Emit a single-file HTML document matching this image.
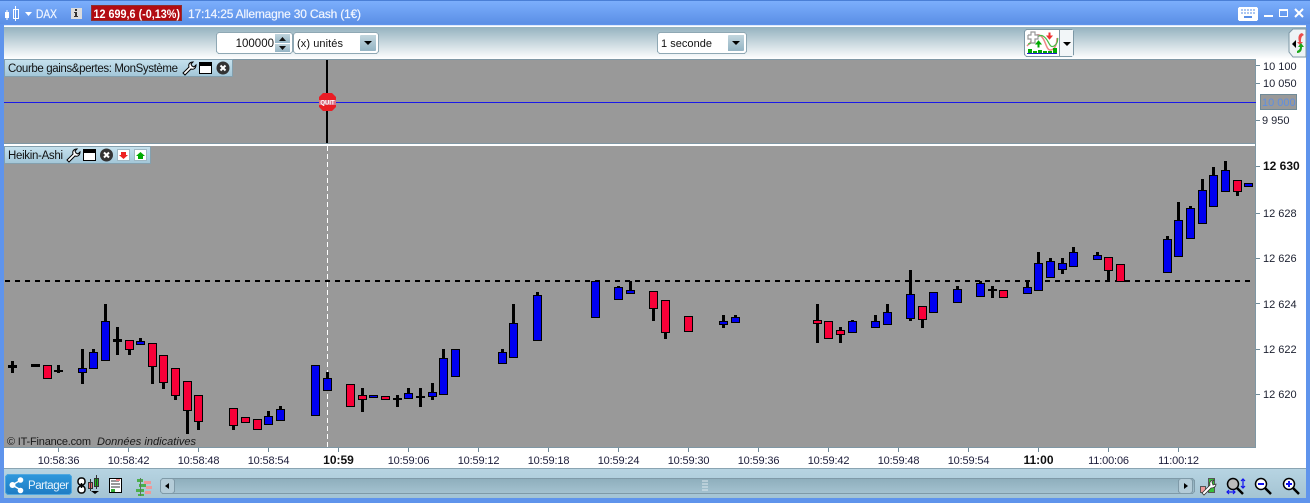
<!DOCTYPE html>
<html><head><meta charset="utf-8"><style>
html,body{margin:0;padding:0;background:#fff;width:1310px;height:503px;overflow:hidden}
svg{display:block}
text{font-family:"Liberation Sans",sans-serif;font-size:11px}
.ax{fill:#1c1c3a;text-anchor:middle;letter-spacing:-.15px}
.pr{fill:#1c2030}
.b rect{fill:#0000f0;stroke:#000;stroke-width:1}
.r rect{fill:#f80038;stroke:#000;stroke-width:1}
</style></head><body>
<svg width="1310" height="503" viewBox="0 0 1310 503" xmlns="http://www.w3.org/2000/svg" shape-rendering="crispEdges">
<defs>
<linearGradient id="tb" x1="0" y1="0" x2="0" y2="1"><stop offset="0" stop-color="#7db0fd"/><stop offset="1" stop-color="#5b8fe6"/></linearGradient>
<linearGradient id="tl" x1="0" y1="0" x2="0" y2="1"><stop offset="0" stop-color="#94b2bf"/><stop offset="1" stop-color="#ffffff"/></linearGradient>
<linearGradient id="bb" x1="0" y1="0" x2="0" y2="1"><stop offset="0" stop-color="#b7d4e2"/><stop offset="1" stop-color="#a4c4d3"/></linearGradient>
<linearGradient id="lg" x1="0" y1="0" x2="0" y2="1"><stop offset="0" stop-color="#c6e2ee"/><stop offset="1" stop-color="#a2c6d8"/></linearGradient>
<linearGradient id="btn" x1="0" y1="0" x2="0" y2="1"><stop offset="0" stop-color="#c2d6de"/><stop offset="1" stop-color="#94b4c4"/></linearGradient>
<linearGradient id="sh" x1="0" y1="0" x2="0" y2="1"><stop offset="0" stop-color="#2e98dc"/><stop offset="1" stop-color="#1f7cc4"/></linearGradient>
<linearGradient id="sc" x1="0" y1="0" x2="0" y2="1"><stop offset="0" stop-color="#8eaebc"/><stop offset="1" stop-color="#a4c2d0"/></linearGradient>
</defs>

<!-- window frame -->
<rect width="1310" height="503" fill="#5f94ec"/>
<rect y="0" width="1310" height="24" fill="url(#tb)"/>
<rect x="0" y="0" width="1310" height="1" fill="#4a7fd6"/>
<rect x="4" y="25" width="1302" height="1" fill="#dbe8fb"/>
<rect x="4" y="26" width="1302" height="472" fill="#fff"/>
<rect x="4" y="27" width="1302" height="32" fill="url(#tl)"/>

<!-- title bar -->
<g>
<rect x="5" y="12" width="4" height="6" fill="#fff"/><rect x="6.500" y="10" width="1" height="10" fill="#fff"/>
<rect x="13.500" y="9.500" width="5" height="9" fill="none" stroke="#fff"/><rect x="15" y="6" width="1" height="15" fill="#fff"/>
<path d="M25 12h7l-3.500 4z" fill="#fff" shape-rendering="auto"/>
<text x="36" y="18" fill="#eef4ff" stroke="#eef4ff" stroke-width=".25" style="font-size:11.500px" textLength="21" lengthAdjust="spacingAndGlyphs">DAX</text>
<rect x="71" y="8" width="11" height="11" fill="#dcdcdc"/><rect x="75" y="9" width="2" height="2" fill="#333"/><rect x="74" y="12" width="3" height="1" fill="#333"/><rect x="75" y="12" width="2" height="5" fill="#333"/><rect x="74" y="16" width="4" height="1" fill="#333"/>
<rect x="91.500" y="5.500" width="90" height="15" fill="#b20b12" stroke="#8c3030"/>
<text x="93.500" y="18" fill="#fff" font-weight="700" textLength="86.500" lengthAdjust="spacingAndGlyphs" style="font-size:12px">12 699,6 (-0,13%)</text>
<text x="188" y="18" fill="#f0f5ff" stroke="#f0f5ff" stroke-width=".2" textLength="173" lengthAdjust="spacing" style="font-size:12px">17:14:25 Allemagne 30 Cash (1€)</text>
<!-- keyboard -->
<rect x="1238" y="7" width="20" height="14" rx="2" fill="#fff"/>
<path d="M1241 10h14M1241 13h14" stroke="#5a8fe6" stroke-dasharray="2 1" fill="none"/><rect x="1244" y="16" width="8" height="2" fill="#5a8fe6"/>
<rect x="1264" y="15" width="9" height="2" fill="#fff"/>
<rect x="1279.500" y="9.500" width="8" height="7" fill="none" stroke="#fff"/><rect x="1279" y="9" width="9" height="2" fill="#fff"/>
<path d="M1295 9l8 8M1303 9l-8 8" stroke="#fff" stroke-width="2" shape-rendering="auto"/>
</g>

<!-- toolbar controls -->
<g>
<rect x="216.500" y="32.500" width="76" height="21" rx="3" fill="#fff" stroke="#8fa8b4"/>
<text x="274" y="47" fill="#111" text-anchor="end" style="font-size:11.500px">100000</text>
<rect x="275" y="34" width="15" height="9" fill="url(#btn)"/><rect x="275" y="44" width="15" height="8" fill="url(#btn)"/>
<path d="M279 41l3.500-4 3.500 4zM279 46l3.500 4 3.500-4z" fill="#111" shape-rendering="auto"/>
<rect x="293.500" y="32.500" width="85" height="21" rx="3" fill="#fff" stroke="#8fa8b4"/>
<text x="297" y="47" fill="#111" textLength="46" lengthAdjust="spacing">(x) unités</text>
<rect x="360" y="35" width="16" height="16" rx="1" fill="url(#btn)"/><path d="M364 41h8l-4 4z" fill="#000" shape-rendering="auto"/>
<rect x="657.500" y="32.500" width="89" height="21" rx="3" fill="#fff" stroke="#8fa8b4"/>
<text x="661" y="47" fill="#111" textLength="51" lengthAdjust="spacing">1 seconde</text>
<rect x="728" y="35" width="16" height="16" rx="1" fill="url(#btn)"/><path d="M732 41h8l-4 4z" fill="#000" shape-rendering="auto"/>
<!-- indicator button -->
<rect x="1024.500" y="29.500" width="49" height="27" rx="3" fill="#fff" stroke="#7d98a6"/>
<rect x="1060" y="30" width="13" height="26" fill="#f2f6f8"/><rect x="1059" y="30" width="1" height="26" fill="#7d98a6"/>
<path d="M1063 42h8l-4 4z" fill="#000" shape-rendering="auto"/>
<g shape-rendering="auto">
<path d="M1027 46c8-8 9-14 14-10s5 15 10 14 6-8 6-12" fill="none" stroke="#e88" stroke-width="1.500"/>
<path d="M1028 44c6 0 9-11 15-8s6 13 11 10 3-7 4-8" fill="none" stroke="#4b4" stroke-width="1.200"/>
<path d="M1033 33h3v-3h4v3h3v4h-3v4h-4v-4h-3v-4" transform="translate(-5 2)" fill="#fff" stroke="#999" stroke-width="1.200"/>
<path d="M1038 47v-3h-2l2.500-3 2.500 3h-2v3z" fill="#0a0" stroke="#0a0"/>
<path d="M1049 33v3h-2l2.500 3 2.500-3h-2v-3z" fill="#e33" stroke="#e33"/>
</g>
<path d="M1028 49h4v4h-4zM1033 51h4v2h-4zM1038 50h4v3h-4zM1043 51h4v2h-4zM1048 51h4v2h-4zM1053 48h4v5h-4z" fill="#0a0"/>
<rect x="1027" y="53" width="30" height="1" fill="#22c"/>
<!-- right tab -->
<path d="M1306 29h-13l-4 4v19l4 5h13z" fill="#eef3f5" stroke="#7d98a6" shape-rendering="auto"/>
<path d="M1292 44l4-4v8z" fill="#000" shape-rendering="auto"/>
<path d="M1302 33c-4 1-4 5-3 9h-2l3 3 3-3h-2c0-3 0-6 3-7z" fill="#e84c4c" shape-rendering="auto"/>
<path d="M1297 53c4 0 5-3 5-6h2l-3-4-3 4h2c0 2-1 3-3 4z" fill="#1aa81a" shape-rendering="auto"/>
</g>

<!-- panels -->
<rect x="4" y="59" width="1252" height="85" fill="#999"/>
<rect x="4" y="59" width="1252" height="1" fill="#7f97a4"/>
<rect x="4" y="143" width="1252" height="1" fill="#7f97a4"/>
<rect x="4" y="146" width="1252" height="301" fill="#999"/>
<rect x="1255" y="59" width="1" height="388" fill="#7f97a4"/>
<rect x="4" y="447" width="1252" height="1" fill="#7f97a4"/>
<rect x="4" y="468" width="1302" height="1" fill="#8aa4b2"/>
<rect x="4" y="469" width="1302" height="29" fill="url(#bb)"/>

<!-- legends -->
<rect x="4.500" y="59.500" width="228" height="17" fill="url(#lg)" stroke="#84a0ae"/>
<text x="8" y="72" fill="#111" textLength="170" lengthAdjust="spacing" style="font-size:11.500px">Courbe gains&amp;pertes: MonSystème</text>
<rect x="4.500" y="146.500" width="146" height="17" fill="url(#lg)" stroke="#84a0ae"/>
<text x="8" y="159" fill="#111" textLength="55" lengthAdjust="spacing" style="font-size:11.500px">Heikin-Ashi</text>
<g id="w1" shape-rendering="auto">
<path d="M183 73l6-6c-1-3 1-5 4-5l-2 2 1 2 2 1 2-2c0 3-2 5-5 4l-6 6z" fill="#fff" stroke="#000" stroke-width="1"/>
<path d="M67 160l6-6c-1-3 1-5 4-5l-2 2 1 2 2 1 2-2c0 3-2 5-5 4l-6 6z" fill="#fff" stroke="#000" stroke-width="1"/>
</g>
<rect x="199.500" y="62.500" width="12" height="11" fill="#fff" stroke="#000"/><rect x="199" y="62" width="13" height="4" fill="#000"/>
<rect x="83.500" y="149.500" width="12" height="11" fill="#fff" stroke="#000"/><rect x="83" y="149" width="13" height="4" fill="#000"/>
<g shape-rendering="auto">
<circle cx="223" cy="68" r="6.500" fill="#333"/><path d="M220.500 65.500l5 5M225.500 65.500l-5 5" stroke="#fff" stroke-width="2"/>
<circle cx="106.500" cy="155" r="6.500" fill="#333"/><path d="M104 152.500l5 5M109 152.500l-5 5" stroke="#fff" stroke-width="2"/>
</g>
<rect x="117.500" y="149.500" width="12" height="11" fill="#fff" stroke="#9fb8c4"/><path d="M121 152h5v3h2l-4.500 4-4.500-4h2z" fill="#e22" shape-rendering="auto"/>
<rect x="134.500" y="149.500" width="12" height="11" fill="#fff" stroke="#9fb8c4"/><path d="M138 159v-3h-2l4.500-4 4.500 4h-2v3z" fill="#0a0" shape-rendering="auto"/>

<!-- top panel lines -->
<rect x="4" y="102" width="1252" height="1" fill="#1a1ae8"/>
<rect x="326" y="60" width="2" height="83" fill="#000"/>
<g shape-rendering="auto">
<path d="M323 93h9l4 4v10l-4 4h-9l-4-4V97z" fill="#ea1c24"/>
<rect x="319" y="100" width="17" height="5" fill="#c8c8e8" opacity=".5"/>
<text x="327.500" y="104.500" text-anchor="middle" style="font-size:6px;font-weight:700" fill="#fff">QUIT</text>
</g>
<!-- crosshair dashed -->
<path d="M327.500 146V447" stroke="#fff" stroke-dasharray="5 3" fill="none"/>
<!-- level dashed -->
<path d="M5 281H1252" stroke="#000" stroke-width="2" stroke-dasharray="5 5" fill="none"/>

<!-- wicks -->
<path stroke="#000" stroke-width="3" fill="none" d="M12.500 361V373M58.500 365V373M82.500 349V384M93.500 349V352M105.500 304V321M117.500 327V355M129.500 350V355M140.500 338V341M152.500 366V384M163.500 382V389M175.500 395V400M187.500 410V434M198.500 421V430M233.500 425V430M268.500 411V416M280.500 406V409M327.500 372V378M362.500 388V412M397.500 395V407M408.500 388V393M420.500 388V407M432.500 383V400M443.500 349V358M502.500 349V352M513.500 304V323M537.500 292V295M618.500 286V287M630.500 281V290M653.500 308V321M665.500 332V339M723.500 315V328M735.500 315V317M817.500 304V343M840.500 327V343M852.500 320V321M875.500 315V321M887.500 304V312M910.500 270V321M922.500 320V328M957.500 286V289M980.500 281V283M992.500 286V298M1027.500 281V287M1038.500 252V263M1050.500 258V261M1062.500 258V274M1073.500 247V252M1097.500 252V255M1108.500 270V281M1167.500 236V239M1178.500 202V220M1190.500 206V208M1202.500 179V190M1213.500 167V175M1225.500 161V170M1237.500 191V196"/>
<!-- flat bars -->
<path fill="#000" d="M8 365h9v3H8zM31 364h9v3h-9zM54 370h9v2h-9zM113 339h9v3h-9zM393 398h9v2h-9zM416 396h9v2h-9zM988 289h9v2h-9z"/>

<!-- blue candles -->
<g class="b">
<rect x="78.500" y="368.500" width="8" height="4"/><rect x="89.500" y="352.500" width="8" height="16"/><rect x="101.500" y="321.500" width="8" height="39"/><rect x="136.500" y="341.500" width="8" height="3"/><rect x="264.500" y="416.500" width="8" height="8"/><rect x="276.500" y="409.500" width="8" height="11"/><rect x="311.500" y="365.500" width="8" height="50"/><rect x="323.500" y="378.500" width="8" height="12"/><rect x="369.500" y="395.500" width="8" height="2"/><rect x="404.500" y="393.500" width="8" height="5"/><rect x="428.500" y="392.500" width="8" height="4"/><rect x="439.500" y="358.500" width="8" height="36"/><rect x="451.500" y="349.500" width="8" height="27"/><rect x="498.500" y="352.500" width="8" height="11"/><rect x="509.500" y="323.500" width="8" height="34"/><rect x="533.500" y="295.500" width="8" height="45"/><rect x="591.500" y="281.500" width="8" height="36"/><rect x="614.500" y="287.500" width="8" height="12"/><rect x="626.500" y="290.500" width="8" height="3"/><rect x="719.500" y="321.500" width="8" height="3"/><rect x="731.500" y="317.500" width="8" height="5"/><rect x="848.500" y="321.500" width="8" height="11"/><rect x="871.500" y="321.500" width="8" height="6"/><rect x="883.500" y="312.500" width="8" height="12"/><rect x="906.500" y="294.500" width="8" height="24"/><rect x="929.500" y="292.500" width="8" height="20"/><rect x="953.500" y="289.500" width="8" height="13"/><rect x="976.500" y="283.500" width="8" height="13"/><rect x="1023.500" y="287.500" width="8" height="6"/><rect x="1034.500" y="263.500" width="8" height="27"/><rect x="1046.500" y="261.500" width="8" height="16"/><rect x="1058.500" y="263.500" width="8" height="6"/><rect x="1069.500" y="252.500" width="8" height="14"/><rect x="1093.500" y="255.500" width="8" height="4"/><rect x="1163.500" y="239.500" width="8" height="33"/><rect x="1174.500" y="220.500" width="8" height="36"/><rect x="1186.500" y="208.500" width="8" height="30"/><rect x="1198.500" y="190.500" width="8" height="33"/><rect x="1209.500" y="175.500" width="8" height="31"/><rect x="1221.500" y="170.500" width="8" height="21"/><rect x="1244.500" y="183.500" width="8" height="3"/>
</g>
<!-- red candles -->
<g class="r">
<rect x="43.500" y="365.500" width="8" height="13"/><rect x="125.500" y="340.500" width="8" height="9"/><rect x="148.500" y="343.500" width="8" height="23"/><rect x="159.500" y="355.500" width="8" height="27"/><rect x="171.500" y="368.500" width="8" height="27"/><rect x="183.500" y="381.500" width="8" height="29"/><rect x="194.500" y="395.500" width="8" height="26"/><rect x="229.500" y="408.500" width="8" height="17"/><rect x="241.500" y="417.500" width="8" height="5"/><rect x="253.500" y="419.500" width="8" height="10"/><rect x="346.500" y="384.500" width="8" height="22"/><rect x="358.500" y="395.500" width="8" height="4"/><rect x="381.500" y="396.500" width="8" height="3"/><rect x="649.500" y="291.500" width="8" height="17"/><rect x="661.500" y="300.500" width="8" height="32"/><rect x="684.500" y="316.500" width="8" height="15"/><rect x="813.500" y="320.500" width="8" height="3"/><rect x="824.500" y="321.500" width="8" height="17"/><rect x="836.500" y="330.500" width="8" height="4"/><rect x="918.500" y="306.500" width="8" height="13"/><rect x="999.500" y="290.500" width="8" height="7"/><rect x="1104.500" y="257.500" width="8" height="13"/><rect x="1116.500" y="264.500" width="8" height="17"/><rect x="1233.500" y="180.500" width="8" height="11"/>
</g>

<text x="7" y="445" fill="#1a1a1a" textLength="84" lengthAdjust="spacing">© IT-Finance.com</text>
<text x="97" y="445" fill="#1a1a1a" font-style="italic" textLength="99" lengthAdjust="spacing">Données indicatives</text>

<!-- price axis -->
<path fill="#6f8a98" d="M1256 65h4v1h-4zM1256 83h4v1h-4zM1256 120h4v1h-4zM1256 166h4v1h-4zM1256 213h4v1h-4zM1256 258h4v1h-4zM1256 303h4v1h-4zM1256 349h4v1h-4zM1256 394h4v1h-4z"/>
<text x="1263" y="70" class="pr">10 100</text>
<text x="1263" y="87" class="pr">10 050</text>
<text x="1262" y="124" class="pr">9 950</text>
<text x="1263" y="170" class="pr" font-weight="700" style="font-size:12px;fill:#111">12 630</text>
<text x="1263" y="217" class="pr">12 628</text>
<text x="1263" y="262" class="pr">12 626</text>
<text x="1263" y="308" class="pr">12 624</text>
<text x="1263" y="353" class="pr">12 622</text>
<text x="1263" y="398" class="pr">12 620</text>
<text x="1262" y="106" fill="#000">10 000</text>
<rect x="1260.500" y="94.500" width="36" height="15" fill="#999" stroke="#6f8a98"/>
<text x="1262" y="106" fill="#5f8fe0">10 000</text>

<!-- time axis -->
<path fill="#6f8a98" d="M58 448h1v4h-1zM128 448h1v4h-1zM198 448h1v4h-1zM268 448h1v4h-1zM338 448h1v4h-1zM408 448h1v4h-1zM478 448h1v4h-1zM548 448h1v4h-1zM618 448h1v4h-1zM688 448h1v4h-1zM758 448h1v4h-1zM828 448h1v4h-1zM898 448h1v4h-1zM968 448h1v4h-1zM1038 448h1v4h-1zM1108 448h1v4h-1zM1178 448h1v4h-1z"/>
<text class="ax" x="58.500" y="464">10:58:36</text><text class="ax" x="128.500" y="464">10:58:42</text><text class="ax" x="198.500" y="464">10:58:48</text><text class="ax" x="268.500" y="464">10:58:54</text>
<text class="ax" x="338.500" y="464" font-weight="700" style="fill:#111;font-size:12px;letter-spacing:0">10:59</text>
<text class="ax" x="408.500" y="464">10:59:06</text><text class="ax" x="478.500" y="464">10:59:12</text><text class="ax" x="548.500" y="464">10:59:18</text><text class="ax" x="618.500" y="464">10:59:24</text><text class="ax" x="688.500" y="464">10:59:30</text><text class="ax" x="758.500" y="464">10:59:36</text><text class="ax" x="828.500" y="464">10:59:42</text><text class="ax" x="898.500" y="464">10:59:48</text><text class="ax" x="968.500" y="464">10:59:54</text>
<text class="ax" x="1038.500" y="464" font-weight="700" style="fill:#111;font-size:12px;letter-spacing:0">11:00</text>
<text class="ax" x="1108.500" y="464">11:00:06</text><text class="ax" x="1178.500" y="464">11:00:12</text>

<!-- bottom bar -->
<rect x="5.500" y="474.500" width="66" height="20" rx="3" fill="url(#sh)" stroke="#4fa8e0"/>
<g shape-rendering="auto">
<path d="M12 485l9-5M12 485l9 5" stroke="#fff" stroke-width="1.500"/>
<circle cx="12.500" cy="485" r="3" fill="#fff"/><circle cx="20.500" cy="480" r="2.800" fill="#fff"/><circle cx="20.500" cy="490.500" r="2.800" fill="#fff"/>
</g>
<text x="28" y="489" fill="#e8f4fc" textLength="41" lengthAdjust="spacing" style="font-size:11.500px">Partager</text>
<!-- chain & candles icon -->
<g shape-rendering="auto">
<rect x="78" y="478" width="7" height="7" rx="3" fill="#fff" stroke="#000" stroke-width="1.500"/>
<rect x="78" y="486" width="7" height="7" rx="3" fill="#fff" stroke="#000" stroke-width="1.500"/>
<path d="M81.500 483v5" stroke="#000" stroke-width="1.500"/>
</g>
<rect x="88.500" y="482.500" width="4" height="6" fill="#e86a6a" stroke="#333"/><rect x="90" y="479" width="1" height="12" fill="#333"/>
<rect x="94.500" y="478.500" width="4" height="8" fill="#1ab81a" stroke="#333"/><rect x="96" y="475" width="1" height="14" fill="#333"/>
<path d="M91 491h8l-4 3z" fill="#000" shape-rendering="auto"/>
<!-- table icon -->
<rect x="109.500" y="478.500" width="12" height="14" fill="#fff" stroke="#000"/>
<path d="M111 481h8M111 484h9M111 487h9M111 490h3" stroke="#333" fill="none"/><rect x="116" y="479" width="4" height="2" fill="#e88"/><rect x="111" y="489" width="4" height="3" fill="#3a3"/>
<!-- bricks icon -->
<path fill="#4caf4c" d="M137 479h6v3h-6zM139 484h7v3h-7zM136 489h8v3h-8zM138 494h6v2h-6z"/>
<path fill="#e99" d="M144 481h7v3h-7zM146 486h6v3h-6zM145 491h6v3h-6z"/>
<rect x="140" y="478" width="1" height="18" fill="#5a7a5a"/>
<!-- scrollbar -->
<rect x="160.500" y="478.500" width="1034" height="15" rx="3" fill="url(#sc)" stroke="#7f9aa8"/>
<rect x="160.500" y="478.500" width="14" height="15" rx="3" fill="#b4ccd8" stroke="#7f9aa8"/>
<path d="M169 483v6l-4-3z" fill="#000" shape-rendering="auto"/>
<rect x="1178.500" y="478.500" width="14" height="15" rx="3" fill="#b4ccd8" stroke="#7f9aa8"/>
<path d="M1184 483v6l4-3z" fill="#000" shape-rendering="auto"/>
<path d="M702 481h6M702 484h6M702 487h6M702 490h6" stroke="#dde8ee" fill="none"/>
<!-- right icons -->
<rect x="1200.500" y="486.500" width="5" height="6" fill="#e99" stroke="#555"/><rect x="1208.500" y="478.500" width="6" height="14" fill="#38c038" stroke="#555"/>
<g shape-rendering="auto">
<path d="M1202 493l8-8c-1-3 1-5 4-5l-2 2 1 3 3-1c0 3-2 4-5 4l-7 7z" fill="#fff" stroke="#333" stroke-width=".8"/>
<circle cx="1233" cy="484" r="5.500" fill="#bbb" stroke="#000" stroke-width="1.500"/>
<path d="M1237 488l6 6" stroke="#000" stroke-width="2.500"/>
<path d="M1243 479v9M1241 481l2-2 2 2M1241 486l2 2 2-2M1227 492h8M1229 490l-2 2 2 2M1233 490l2 2-2 2" stroke="#11e" stroke-width="1.200" fill="none"/>
<circle cx="1261" cy="484" r="5.500" fill="#fff" stroke="#000" stroke-width="1.500"/>
<path d="M1258 484h6" stroke="#11e" stroke-width="2"/>
<path d="M1265 488l6 6" stroke="#000" stroke-width="2.500"/>
<circle cx="1289" cy="484" r="5.500" fill="#fff" stroke="#000" stroke-width="1.500"/>
<path d="M1286 484h6M1289 481v6" stroke="#11e" stroke-width="2"/>
<path d="M1293 488l6 6" stroke="#000" stroke-width="2.500"/>
</g>
</svg>
</body></html>
